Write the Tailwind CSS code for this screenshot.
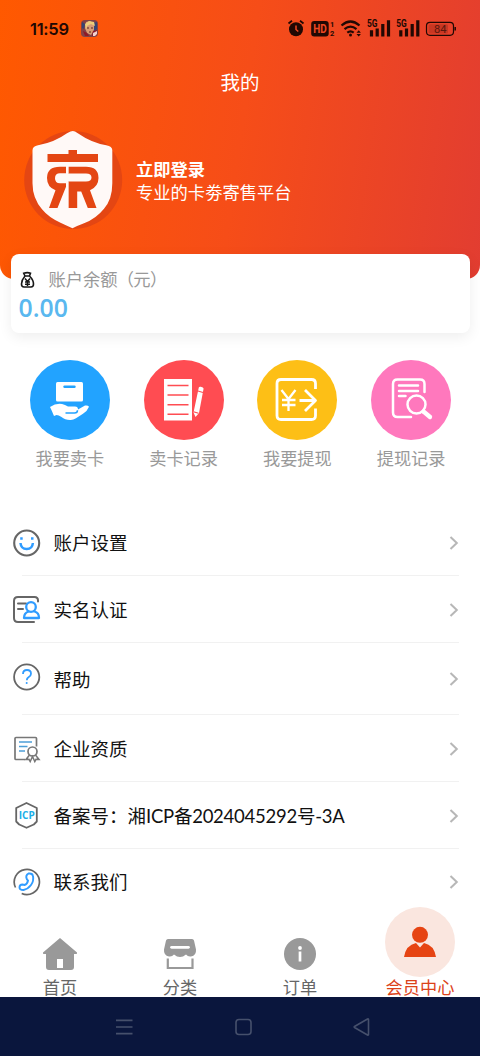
<!DOCTYPE html>
<html lang="zh-CN">
<head>
<meta charset="utf-8">
<meta name="viewport" content="width=device-width">
<title>我的</title>
<script src="https://cdn.jsdelivr.net/npm/@tailwindcss/browser@4"></script>
</head>
<body class="w-[480px] h-[1056px] overflow-hidden bg-white font-['Lato','Noto_Sans_CJK_SC',sans-serif] flex flex-col">

<header class="h-[279px] shrink-0 rounded-b-[14px] bg-linear-[98deg,#ff5900,#f64d18_50%,#e23d31] text-white flex flex-col">
  <!-- status bar -->
  <div class="h-[57px] pl-[30px] pr-[24px] flex items-center text-[#210803]">
    <span class="w-[51px] pt-[2px] text-[16.5px] leading-none font-semibold font-['Inter'] tracking-[-0.3px]">11:59</span>
    <svg width="17" height="17" viewBox="0 0 17 17"><rect width="17" height="17" rx="4" fill="#814246"/><path d="M1 2l3 2-1 5-2-1zM12 3l4-1v7l-3 3z" fill="#374572"/><path d="M5 2l4-1 4 3v6l-3 5-4-2-2-5z" fill="#d89c75"/><path d="M4 4l4-3 5 1 1 4-4-2-4 2-1 4z" fill="#edce78"/><path d="M6 8h2M10 8h2M8 12h2" stroke="#5b2623"/><path d="M2 11l4 2 2 3H4zM12 11l4-1v5l-5 1z" fill="#8e1a27"/><path d="M12 13l4-2v3l-2 2h-2z" fill="#f2d2cf"/></svg>
    <svg class="ml-auto" width="170" height="30" viewBox="286 14 170 30" fill="none" stroke="#210803">
      <circle cx="296" cy="29.3" r="7" fill="#210803" stroke="none"/><path d="M288.5 23.5l3.5-2.7M303.500 23.500l-3.500-2.700" stroke-width="1.800"/><path d="M296 25.500v4l2.300 2" stroke="#ef4822" stroke-width="1.500"/>
      <rect x="311.200" y="21" width="17.500" height="15.500" rx="3" fill="#210803" stroke="none"/>
      <text x="313.300" y="33" font-family="Roboto" font-weight="700" font-size="12" textLength="13.500" lengthAdjust="spacingAndGlyphs" fill="#ef4822" stroke="none">HD</text>
      <g fill="#210803" stroke="none" font-family="Roboto" font-weight="700"><text x="330" y="27" font-size="7.500">1</text><text x="330" y="36" font-size="7.500">2</text>
      <text x="367" y="26.800" font-size="10.500" textLength="10.500" lengthAdjust="spacingAndGlyphs">5G</text><text x="396.300" y="26.800" font-size="10.500" textLength="10.500" lengthAdjust="spacingAndGlyphs">5G</text></g>
      <path d="M341.500 25.500q9-8 18 0M344.500 29.200q6-5 12 0M347.300 32.700q3.200-2.500 6.400 0" stroke-width="2.200"/><circle cx="350.500" cy="35" r="1.500" fill="#210803" stroke="none"/><path d="M356.500 32.700l2.200-2.400 2.200 2.400zM356.500 34l2.200 2.400 2.200-2.400z" fill="#210803" stroke="none"/>
      <path d="M371.500 30.300v6.200M377.200 28.500v8M382.800 24v12.500M388.500 20.300v16.200M400.800 30.300v6.200M406.500 28.500v8M412.200 24v12.500M417.800 20.300v16.200" stroke-width="3.200"/>
      <rect x="426.500" y="22.300" width="27" height="13" rx="3.500" stroke-width="1.200"/><rect x="428.500" y="24.200" width="19.500" height="9.200" rx="1.500" fill="#4a0d0b" fill-opacity=".2" stroke="none"/><path d="M455.200 27v3.600" stroke-width="1.500"/>
      <text x="434" y="32.700" font-family="Roboto" font-size="11" textLength="12.500" lengthAdjust="spacingAndGlyphs" fill="#5a170c" stroke="none">84</text>
    </svg>
  </div>
  <h1 class="h-[50px] text-center text-[19.5px] leading-[52px] font-normal">我的</h1>
  <div class="mt-[22px] pl-[23px] flex items-center">
    <svg width="100" height="102" viewBox="23 129 100 102">
      <circle cx="73.200" cy="180" r="49" fill="#e44613"/>
      <path d="M72.800 131q2 0 5 2.300 14 9.700 28.500 12 6 1 6 5v33q0 16-8.300 25.500-8 10-20 14.500-8 3-11.500 5-4-2-12-5.500-12-5.500-18.500-13.500-9.500-11-9.500-26v-33q0-4 5.500-5 16-2.700 29-12 4-2.300 5.800-2.300z" fill="#fff9f7"/>
      <path d="M47.500 154h21v-4h8.500v4h21v8H47.500z" fill="#e44613"/>
      <path d="M66 166.700h-6q-13 0-13 11.300 0 9 8.500 12.300L49 208h8.500l8.500-21.300v-3.400h-6q-5 0-5-5t5-5h6zM68.500 166.700H86q12.500 0 12.500 11.300 0 8.500-8.500 12.300L96.500 208h-8.700l-6.600-16.500h-4V208h-8.700v-26.500h17.500q5.500 0 5.500-4t-5.500-4H68.500z" fill="#e44613"/>
      <path d="M67.300 166v7M67.300 182v26" stroke="#fff9f7" stroke-width="2"/>
    </svg>
    <div class="ml-[13px] pt-[2px] text-[17.3px] leading-[23px]"><p class="font-bold">立即登录</p><p>专业的卡劵寄售平台</p></div>
  </div>
</header>

<main class="flex-1 min-h-0 flex flex-col">
  <section class="relative -mt-[25px] mx-[10.5px] h-[79px] shrink-0 rounded-[8px] bg-white shadow-[0_4px_14px_rgba(0,0,0,0.07)] pt-[13px] pl-[8px]">
    <div class="flex items-center h-[25px] text-[17.3px] text-[#999]">
      <svg class="mr-[13px]" width="17" height="18" viewBox="0 0 17 18" fill="none" stroke="#181818" stroke-width="1.600"><path d="M6 5L4.700 2.300Q8.500 1 11.500 2.300L10.500 5zM6 5h4.500q4 4 4 8 0 3-2.500 3H5q-2.500 0-2.500-3 0-4 3.500-8z"/><path d="M6 7.500l2.500 3 2.500-3M8.500 10v5M6 11h5M6 13.300h5" stroke-width="1.500"/></svg>
      <span class="pt-px">账户余额<span class="-ml-px tracking-[-0.600px]">（元）</span></span>
    </div>
    <p class="text-[24.8px] leading-[30px] font-semibold font-['Open_Sans'] text-[#5ab8ef]">0.00</p>
  </section>

  <nav class="mt-[27px] ml-[13px] mr-[12px] shrink-0 grid grid-cols-4 text-[17.2px] text-[#999] text-center">
    <div class="flex flex-col items-center"><svg width="80" height="80" viewBox="30 360 80 80"><circle cx="70" cy="400" r="40" fill="#22a3ff"/><rect x="56" y="382" width="27" height="19.500" rx="1.500" fill="#fff"/><path d="M64.500 386.700h10" stroke="#22a3ff" stroke-width="2.400" stroke-linecap="round"/><path d="M50 407q6-4 12-3 3 .5 6 2.500h7q3 0 3 3l7-4q3-.5 4 1.200-1.500 4-6 7l-7 4.500q-3 2-6 1.700-5 0-8.500-3-3-2-5-2l-2.500 1q-2-5-4-9z" fill="#fff"/><path d="M65.500 413h9q3 0 3-2.800" fill="none" stroke="#22a3ff" stroke-width="1.500"/></svg><span class="leading-[38px]">我要卖卡</span></div>
    <div class="flex flex-col items-center"><svg width="80" height="80" viewBox="144 360 80 80"><circle cx="184" cy="400" r="40" fill="#ff4c52"/><path d="M164 379h28v41.500h-28z" fill="#fff"/><path d="M167.500 385.500h21M167.500 395h21M167.500 404.700h21M167.500 414.300h21" stroke="#ff4c52" stroke-width="1.500"/><path d="M198.800 387.500q.5-1.200 2-.7l2 .7q1 .5.700 1.600l-4.500 24-3.500 4-2-4.600z" fill="#fff"/><path d="M198 391l5 1.500M193.500 411.800l5 1.500" stroke="#ff4c52" stroke-width="1.200"/></svg><span class="leading-[38px]">卖卡记录</span></div>
    <div class="flex flex-col items-center"><svg width="80" height="80" viewBox="257 360 80 80" fill="none" stroke="#fff" stroke-width="2.800" stroke-linejoin="round"><circle cx="297" cy="400" r="40" fill="#fdbf16" stroke="none"/><path d="M315.500 389v-5.500q0-4-4-4H281q-4 0-4 4v32q0 4 4 4h30.500q4 0 4-4v-7"/><path d="M281.500 390l7 9 7-9M288.500 399v12M282 400h13.500M282 405h13.500" stroke-width="2.300"/><path d="M299.500 400.500h16.500M305 390l10.500 10.500L305 411"/></svg><span class="leading-[38px]">我要提现</span></div>
    <div class="flex flex-col items-center"><svg width="80" height="80" viewBox="371 360 80 80" fill="none" stroke="#fff" stroke-width="2.500" stroke-linecap="round"><circle cx="411" cy="400" r="40" fill="#ff78bd" stroke="none"/><path d="M424.500 392v-8q0-4.500-4.500-4.500h-22.500q-4.500 0-4.500 4.500v28.500q0 4.500 4.500 4.500H411M399 385.500h19M399 391h19M399 396h6.500"/><circle cx="416.500" cy="404.500" r="9"/><path d="M423.500 411.500l6.500 5.500" stroke-width="4.300"/></svg><span class="leading-[38px]">提现记录</span></div>
  </nav>

  <ul class="mt-[31px] pl-[12px] pr-[20px] shrink-0 text-[18.500px] text-[#111]">
    <li class="h-[67px] flex items-center bg-[linear-gradient(#f1f1f1,#f1f1f1)] bg-no-repeat bg-[length:437px_1.500px] bg-[position:10px_100%]"><svg width="30" height="30" viewBox="12 528.500 30 30" fill="none" stroke="#666" stroke-width="2.100"><circle cx="26.700" cy="543.500" r="12.500"/><path d="M20.500 543.500q.5 6 6.200 6t6.200-6" stroke="#309cff" stroke-width="2.500"/><path d="M20.200 539h2.500M31 539h2.500" stroke="#309cff" stroke-width="2.500"/></svg><span class="ml-[11.500px] pt-[2px]">账户设置</span><svg class="ml-auto" width="11" height="16" viewBox="0 0 11 16" fill="none" stroke="#b7b7b7" stroke-width="2"><path d="M1.500 2l6.300 6-6.300 6"/></svg></li>
    <li class="h-[67px] flex items-center bg-[linear-gradient(#f1f1f1,#f1f1f1)] bg-no-repeat bg-[length:437px_1.500px] bg-[position:10px_100%]"><svg width="30" height="30" viewBox="12 594.500 30 30" fill="none" stroke="#666" stroke-width="2" stroke-linecap="round"><path d="M38 601v-1q0-3.500-3.500-3.500H18q-4 0-4 4v17q0 4 4 4h16M18 603h8M18 608.500h5"/><g stroke="#309cff" stroke-width="2.300"><circle cx="31" cy="606.500" r="4.800"/><path d="M28.500 611q-4.500 1.500-4.500 6.500h15q0-5.500-4.500-6.500" stroke-linejoin="round"/></g></svg><span class="ml-[11.500px] pt-[2px]">实名认证</span><svg class="ml-auto" width="11" height="16" viewBox="0 0 11 16" fill="none" stroke="#b7b7b7" stroke-width="2"><path d="M1.500 2l6.300 6-6.300 6"/></svg></li>
    <li class="h-[72px] flex items-center bg-[linear-gradient(#f1f1f1,#f1f1f1)] bg-no-repeat bg-[length:437px_1.500px] bg-[position:10px_100%]"><svg class="mb-[4px]" width="30" height="30" viewBox="12 661.500 30 30" fill="none" stroke="#666" stroke-width="1.800"><circle cx="26.700" cy="676.500" r="12.600"/><path d="M23 673.500q0-4 4-4t4 3.700q0 2-2.500 3.500-1.700 1-1.700 3" stroke="#309cff"/><circle cx="26.700" cy="682.500" r="1" fill="#309cff" stroke="none"/></svg><span class="ml-[11.500px] pt-[3px]">帮助</span><svg class="ml-auto" width="11" height="16" viewBox="0 0 11 16" fill="none" stroke="#b7b7b7" stroke-width="2"><path d="M1.500 2l6.300 6-6.300 6"/></svg></li>
    <li class="h-[67px] flex items-center bg-[linear-gradient(#f1f1f1,#f1f1f1)] bg-no-repeat bg-[length:437px_1.500px] bg-[position:10px_100%]"><svg width="30" height="30" viewBox="12 733.500 30 30" fill="none" stroke="#777" stroke-width="1.700"><path d="M36.500 746v-8q0-1-1-1H16q-1 0-1 1v20q0 1 1 1h9"/><path d="M19 741.500h13M19 746h8.500M19 750.500h6" stroke="#4d9fd7"/><circle cx="32.500" cy="751" r="4.500"/><path d="M29.500 754.500l-3.500 4.500 3-.2 1.200 2.200 2.300-5 2.300 5 1.200-2.200 3 .2-3.500-4.500" stroke-width="1.500"/></svg><span class="ml-[11.500px] pt-[2px]">企业资质</span><svg class="ml-auto" width="11" height="16" viewBox="0 0 11 16" fill="none" stroke="#b7b7b7" stroke-width="2"><path d="M1.500 2l6.300 6-6.300 6"/></svg></li>
    <li class="h-[67px] flex items-center bg-[linear-gradient(#f1f1f1,#f1f1f1)] bg-no-repeat bg-[length:437px_1.500px] bg-[position:10px_100%]"><svg width="30" height="30" viewBox="12 800.500 30 30" fill="none" stroke="#666" stroke-width="1.800"><path d="M26.500 802.500l10.300 5v13.500l-3 3-7.300 3.300-7.300-3.300-3-3v-13.500z" stroke-linejoin="round"/><text x="18.700" y="818.500" font-family="Open Sans" font-size="10.500" font-weight="700" fill="#1aaee8" stroke="none" textLength="16" lengthAdjust="spacingAndGlyphs">ICP</text></svg><span class="ml-[11.500px] pt-[2px]">备案号：湘<span class="tracking-[-0.250px]">ICP备2024045292号-3A</span></span><svg class="ml-auto" width="11" height="16" viewBox="0 0 11 16" fill="none" stroke="#b7b7b7" stroke-width="2"><path d="M1.500 2l6.300 6-6.300 6"/></svg></li>
    <li class="h-[66px] flex items-center"><svg width="30" height="30" viewBox="12 867 30 30" fill="none" stroke="#666" stroke-width="1.700"><path d="M15.500 887.500a12.600 12.600 0 1 1 6.200 6"/><path d="M28.500 873.500q4-.5 4.500 2.500 1 5-2 9t-7.500 5q-4 0-4-2.500 0-3 3-3l2 .5q3-1 3.500-4.500l-1-1q-2-4 1.500-6z" stroke="#309cff" stroke-width="1.900"/></svg><span class="ml-[11.500px] pt-[2px]">联系我们</span><svg class="ml-auto" width="11" height="16" viewBox="0 0 11 16" fill="none" stroke="#b7b7b7" stroke-width="2"><path d="M1.500 2l6.300 6-6.300 6"/></svg></li>
  </ul>
</main>

<!-- tab bar -->
<footer class="h-[91px] shrink-0 grid grid-cols-4 items-end text-[17.2px] leading-[20px] text-[#666] text-center">
  <div class="flex flex-col items-center"><svg width="36" height="36" viewBox="42 936 36 36"><path d="M60 938l17 14.500q.5 1.500-1 1.500h-2v13q0 3-3 3H49q-3 0-3-3v-13h-2q-1.500 0-1-1.500zM57 959v9h6v-9z" fill="#999" fill-rule="evenodd"/></svg><span class="mt-[6px] -mb-[1px]">首页</span></div>
  <div class="flex flex-col items-center"><svg width="36" height="36" viewBox="162 936 36 36"><path d="M168 939h24q1.500 0 2 1.500l2 9q.5 6-5 7-3 .5-5-2-3 2.500-6 2.500t-6-2.500q-2 2.500-5 2-5.500-1-5-7l2-9q.5-1.500 2-1.500z" fill="#999"/><path d="M171.500 947.300h17" stroke="#fff" stroke-width="2.700" stroke-linecap="round"/><path d="M167.800 958.500V968h24.700v-9.500" fill="none" stroke="#999" stroke-width="2.200"/></svg><span class="mt-[6px] -mb-[1px]">分类</span></div>
  <div class="flex flex-col items-center"><svg width="36" height="36" viewBox="282 936 36 36"><circle cx="300" cy="954" r="16" fill="#999"/><circle cx="300" cy="948" r="1.900" fill="#fff"/><path d="M300 951.500v10" stroke="#fff" stroke-width="2.700"/></svg><span class="mt-[6px] -mb-[1px]">订单</span></div>
  <div class="flex flex-col items-center text-[#dc4219]"><svg width="70" height="70" viewBox="385 907 70 70"><circle cx="420" cy="942" r="35" fill="#fae6df"/><circle cx="420" cy="934.800" r="8" fill="#e64413"/><path d="M404 957q2-12 12-14l4 4.500 4-4.500q10 2 12 14z" fill="#e64413"/></svg><span class="mt-[1px] -mb-[1px]">会员中心</span></div>
</footer>

<!-- system navigation -->
<div class="h-[59px] shrink-0 bg-[#0a163d] pl-[115px] flex items-center gap-[100px]">
  <svg width="18" height="18" viewBox="0 0 18 18" stroke="#46506c" stroke-width="1.700"><path d="M1 2.300h16.500M1 9h16.500M1 15.700h16.500"/></svg>
  <svg width="20" height="18" viewBox="0 0 20 18" fill="none" stroke="#46506c" stroke-width="1.600"><rect x="3" y="1.500" width="15" height="15" rx="3"/></svg>
  <svg width="18" height="20" viewBox="0 0 18 20" fill="none" stroke="#46506c" stroke-width="1.600" stroke-linejoin="round"><path d="M15.500 2.500v15q0 1-1 .5l-13-7.500q-.7-.5 0-1l13-7.500q1-.5 1 .5z"/></svg>
</div>
</body>
</html>
